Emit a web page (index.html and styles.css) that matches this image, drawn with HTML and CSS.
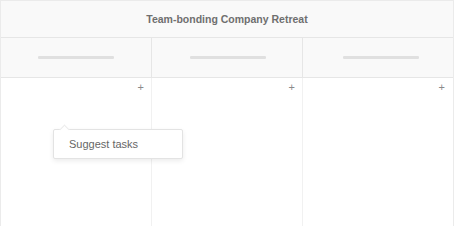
FILE: index.html
```html
<!DOCTYPE html>
<html>
<head>
<meta charset="utf-8">
<link rel="stylesheet" href="styles.css">
</head>
<body>
<div class="board">
  <div class="title">Team-bonding Company Retreat</div>
  <div class="heads">
    <div class="head"><span class="bar"></span></div>
    <div class="head"><span class="bar"></span></div>
    <div class="head"><span class="bar"></span></div>
  </div>
  <div class="cols">
    <div class="col"><span class="plus">+</span></div>
    <div class="col"><span class="plus">+</span></div>
    <div class="col"><span class="plus">+</span></div>
  </div>
  <div class="popup"><span class="caret"></span>Suggest tasks</div>
</div>
</body>
</html>
```
FILE: styles.css
```css
* { box-sizing: border-box; }
html, body { margin: 0; padding: 0; background: #fff; }
body { font-family: "Liberation Sans", Arial, sans-serif; }
.board {
  position: relative;
  width: 454px;
  height: 226px;
  border: 1px solid #ebebeb;
  border-bottom: none;
  display: flex;
  flex-direction: column;
}
.title {
  height: 37px;
  background: #f9f9f9;
  border-bottom: 1px solid #e6e6e6;
  display: flex;
  align-items: center;
  justify-content: center;
  font-size: 10.5px;
  font-weight: bold;
  color: #6f6f6f;
}
.heads {
  display: grid;
  grid-template-columns: 151px 151px 1fr;
  height: 40px;
  background: #f9f9f9;
  border-bottom: 1px solid #e6e6e6;
}
.head {
  display: flex;
  align-items: center;
  padding-left: 37px;
  border-right: 1px solid #e6e6e6;
}
.head:nth-child(2) { padding-left: 38px; }
.head:last-child { border-right: none; padding-left: 40px; }
.bar {
  display: block;
  width: 76px;
  height: 3px;
  background: #e0e0e0;
  border-radius: 1px;
}
.cols {
  flex: 1;
  display: grid;
  grid-template-columns: 151px 151px 1fr;
}
.col {
  border-right: 1px solid #f1f1f1;
  display: flex;
  justify-content: flex-end;
  align-items: flex-start;
  padding: 3px 7px 0 0;
}
.col:last-child { border-right: none; padding-right: 8px; }
.plus {
  font-size: 11px;
  line-height: 12px;
  color: #8a8a8a;
}
.popup {
  position: absolute;
  left: 52px;
  top: 128px;
  width: 130px;
  height: 30px;
  background: #fff;
  border: 1px solid #e3e3e3;
  border-radius: 2px;
  box-shadow: 0 2px 5px rgba(0,0,0,0.08);
  font-size: 11px;
  color: #666;
  padding-left: 15px;
  display: flex;
  align-items: center;
}
.caret {
  position: absolute;
  left: 7px;
  top: -4px;
  width: 7px;
  height: 7px;
  background: #fff;
  border-left: 1px solid #ececec;
  border-top: 1px solid #ececec;
  transform: rotate(45deg);
}
```
